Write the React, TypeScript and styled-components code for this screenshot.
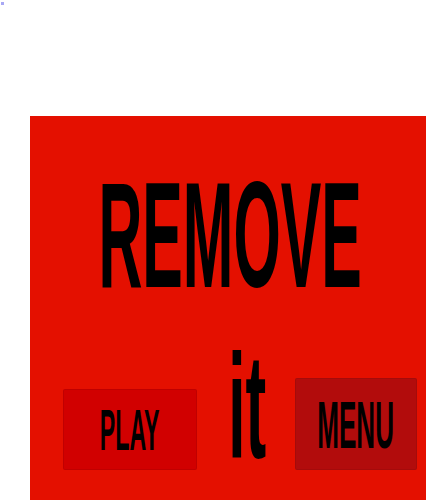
import styled, { createGlobalStyle } from "styled-components";

const GlobalStyle = createGlobalStyle`
  html, body {
    margin: 0;
    padding: 0;
    background: #ffffff;
    font-family: "Liberation Sans", Arial, sans-serif;
  }
`;

export default function App() {
  return (
    <>
      <GlobalStyle />
      <Page>
        <Marker />
        <Panel>
          <Title>
            <Squeeze $scale={0.405}>REMOVE</Squeeze>
          </Title>
          <BottomRow>
            <GameButton $bg="#d10000" $width={134} $height={81} $top={56} $size={58}>
              <Squeeze $scale={0.4}>PLAY</Squeeze>
            </GameButton>
            <ItWord>
              <Squeeze $scale={0.42}>it</Squeeze>
            </ItWord>
            <GameButton $bg="#b20c0c" $width={122} $height={92} $top={45} $size={67}>
              <Squeeze $scale={0.39}>MENU</Squeeze>
            </GameButton>
          </BottomRow>
        </Panel>
      </Page>
    </>
  );
}

const Page = styled.div`
  width: 426px;
  height: 500px;
  overflow: hidden;
  position: relative;
`;

const Marker = styled.div`
  position: absolute;
  top: 2px;
  left: 1px;
  width: 3px;
  height: 3px;
  background: #a8a8f4;
`;

const Panel = styled.div`
  margin: 116px 0 0 30px;
  height: 384px;
  background: #e41000;
  padding-top: 44px;
  box-sizing: border-box;
  display: flex;
  flex-direction: column;
  overflow: hidden;
`;

const Title = styled.div`
  font-size: 150px;
  font-weight: 700;
  line-height: 1;
  color: #000;
  height: 150px;
  padding-left: 5px;
  white-space: nowrap;
  display: flex;
  justify-content: center;
`;

const Squeeze = styled.span<{ $scale: number }>`
  display: inline-block;
  flex-shrink: 0;
  transform: scaleX(${(p) => p.$scale});
  transform-origin: center;
`;

const BottomRow = styled.div`
  display: flex;
  align-items: flex-start;
  margin-top: 23px;
  padding-left: 33px;
`;

const GameButton = styled.div<{
  $bg: string;
  $width: number;
  $height: number;
  $top: number;
  $size: number;
}>`
  width: ${(p) => p.$width}px;
  height: ${(p) => p.$height}px;
  margin-top: ${(p) => p.$top}px;
  flex-shrink: 0;
  box-sizing: border-box;
  background: ${(p) => p.$bg};
  border: 1px solid rgba(0, 0, 0, 0.08);
  border-radius: 2px;
  display: flex;
  align-items: center;
  justify-content: center;
  font-size: ${(p) => p.$size}px;
  font-weight: 700;
  line-height: 1;
  color: #000;
  white-space: nowrap;
`;

const ItWord = styled.div`
  width: 40px;
  flex-shrink: 0;
  margin: 0 28px 0 30px;
  font-size: 148px;
  font-weight: 700;
  line-height: 1;
  color: #000;
  white-space: nowrap;
  display: flex;
  justify-content: center;
`;
